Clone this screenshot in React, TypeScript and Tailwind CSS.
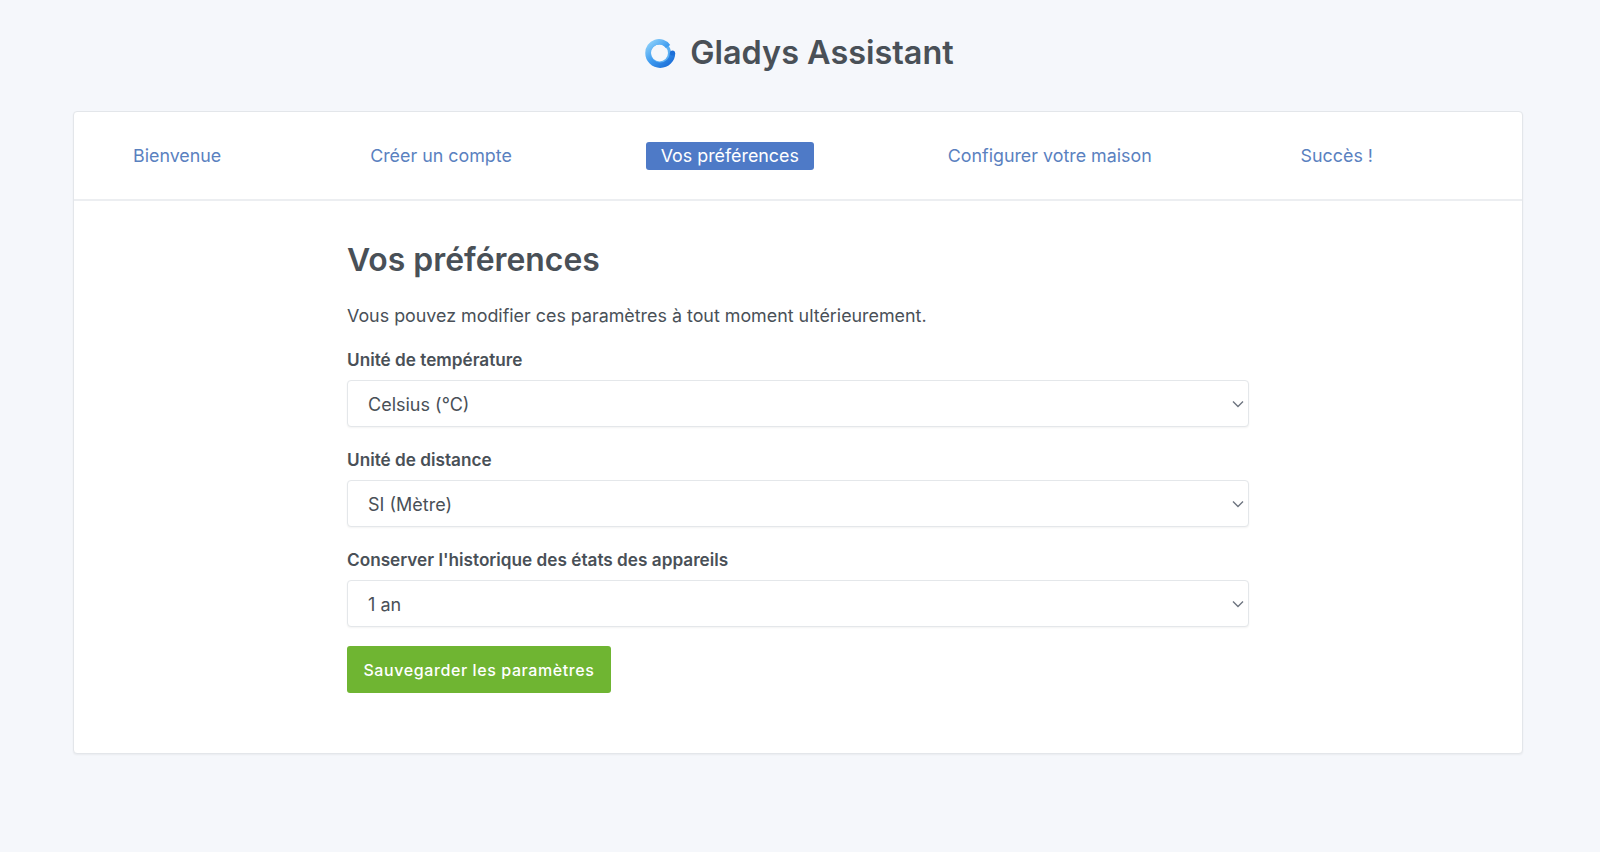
const steps = ["Bienvenue", "Créer un compte", "Vos préférences", "Configurer votre maison", "Succès !"];

const fields = [
  { label: "Unité de température", value: "Celsius (°C)" },
  { label: "Unité de distance", value: "SI (Mètre)" },
  { label: "Conserver l'historique des états des appareils", value: "1 an" },
];

function Logo() {
  return (
    <svg width="34" height="32" viewBox="0 0 34 32" fill="none">
      <defs>
        <linearGradient id="ring" x1="5" y1="4" x2="26" y2="28" gradientUnits="userSpaceOnUse">
          <stop offset="0" stopColor="#8fd2fa" />
          <stop offset="0.5" stopColor="#3f9cf0" />
          <stop offset="1" stopColor="#1c6fd8" />
        </linearGradient>
      </defs>
      <circle cx="15.5" cy="16" r="10" stroke="#5cb0f3" strokeWidth="3" />
      <path d="M24 9.5A11 11 0 0 0 4 16A12.25 12.25 0 0 0 28.5 16" stroke="url(#ring)" strokeWidth="5.5" />
      <circle cx="28.5" cy="16" r="2.6" fill="#1c6fd8" />
    </svg>
  );
}

function SelectBox({ label, value }: { label: string; value: string }) {
  return (
    <div className="mb-[21px]">
      <div className="mb-[8px] text-[17.2px] leading-[24px] font-semibold text-[#495057]">{label}</div>
      <div className="flex h-[47px] items-center justify-between rounded-[4px] border border-[#e4e7ea] bg-white pr-[4px] pl-[20px] shadow-[0_1px_2px_rgba(0,0,0,0.05)]">
        <span className="pt-[1px] text-[18px] text-[#495057]">{value}</span>
        <svg width="12" height="8" viewBox="0 0 12 8" fill="none">
          <path d="M1 1.5l5 5 5-5" stroke="#6e7580" strokeWidth="1.4" />
        </svg>
      </div>
    </div>
  );
}

export default function App() {
  return (
    <div className="min-h-[852px] bg-[#f5f7fb] pr-[77px] pl-[73px] pt-[30px] font-['Inter',sans-serif] text-[#495057]">
      <div className="mb-[35px] flex h-[46px] items-center justify-center gap-[12px] pl-[2px]">
        <Logo />
        <span className="text-[32.4px] font-semibold">Gladys Assistant</span>
      </div>
      <div className="h-[643px] rounded-[4px] border border-[#e3e6ea] bg-white shadow-[0_1px_2px_rgba(0,0,0,0.05)]">
        <div className="flex h-[89px] items-center justify-between border-b-2 border-[#eceef1] pr-[134px] pl-[44px]">
          {steps.map((step) => (
            <span
              key={step}
              className={
                step === "Vos préférences"
                  ? "rounded-[3px] bg-[#4e7ac7] px-[15px] text-[17.85px] leading-[28px] text-white"
                  : "px-[15px] text-[17.85px] leading-[28px] text-[#5a81bf]"
              }
            >
              {step}
            </span>
          ))}
        </div>
        <div className="ml-[273px] w-[902px] pt-[36px]">
          <h1 className="mb-[20px] text-[31.9px] leading-[46px] font-semibold">Vos préférences</h1>
          <p className="mb-[19px] text-[17.87px] leading-[26px]">
            Vous pouvez modifier ces paramètres à tout moment ultérieurement.
          </p>
          {fields.map((field) => (
            <SelectBox key={field.label} label={field.label} value={field.value} />
          ))}
          <button className="mt-[-2px] h-[47px] w-[264px] rounded-[3px] bg-[#6fb532] text-[16px] font-medium tracking-[0.6px] text-white">
            Sauvegarder les paramètres
          </button>
        </div>
      </div>
    </div>
  );
}
